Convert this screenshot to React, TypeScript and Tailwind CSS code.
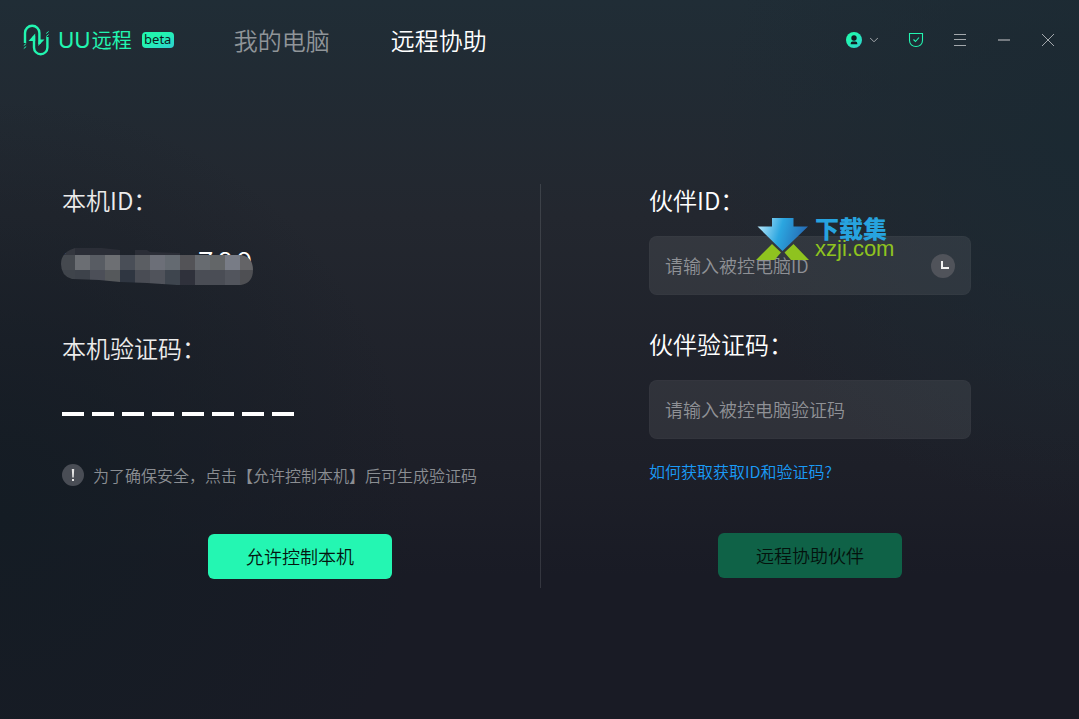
import type { ReactNode } from "react";

// 15px tiles that hide the device id
const MASK_ROWS = [
  {
    y: 0,
    height: 7,
    colors: ["#34373f", "#2b2e37", "#2b2e37", "#2b2e37", "none", "#2b2e37", "#2b2e37", "#2b2e37", "none"],
  },
  {
    y: 7,
    height: 15,
    colors: [
      "#45494f", "#6b6e73", "#585c63", "#6d6f73", "#494e57", "#5b5e63", "#6c6f78",
      "#646a71", "#535357", "#676b70", "#636668", "#787c86", "#646467",
    ],
  },
  {
    y: 22,
    height: 15,
    colors: [
      "#3f444b", "#3d424a", "#4c4f58", "#55585b", "#2f3641", "#494c54", "#50535b",
      "#3e454e", "#2f313b", "#4a4d55", "#4a4d55", "#52555d", "#4e4f53",
    ],
  },
];

const CODE_SLOTS = [0, 1, 2, 3, 4, 5, 6, 7];

function Logo() {
  return (
    <svg viewBox="0 0 26 32" fill="none" stroke="#22f5b0" strokeWidth={2.4} className="h-8 w-[26px]">
      <path d="M2 19V9a7.200 7.200 0 0 1 14.400 0V20" />
      <path d="M11 12v11.500a6.700 6.700 0 0 0 13.400 0V13" />
      <path d="M16 15.500h5.500L15.200 22ZM12.200 9.500V17H5.500Z" fill="#22f5b0" stroke="none" />
      <path d="M.8 21.500l2.400-2M.8 24.500l2.400-2M23.200 9.500l2.400-2M23.200 12.500l2.400-2" strokeWidth={1} />
    </svg>
  );
}

function UserIcon() {
  return (
    <svg viewBox="0 0 16 16" className="size-4">
      <defs>
        <linearGradient id="user-fill" x1="0" y1="0" x2="1" y2="1">
          <stop offset="0.3" stopColor="#22f5b0" />
          <stop offset="1" stopColor="#2fcfd0" />
        </linearGradient>
      </defs>
      <circle cx="8" cy="8" r="8" fill="url(#user-fill)" />
      <circle cx="8" cy="6" r="2.700" fill="#101a20" />
      <path d="M4.700 12.300v-.8a2 2 0 0 1 2-2h2.600a2 2 0 0 1 2 2v.8Z" fill="#101a20" />
    </svg>
  );
}

function MaskedId() {
  return (
    <div className="relative mt-8 h-10 w-[192px] text-white">
      <span className="absolute left-0 top-0 text-[28px] leading-6">1</span>
      <span className="absolute right-0.5 top-0 flex gap-1 text-[28px] leading-6">
        <span>7</span>
        <span>8</span>
        <span>9</span>
      </span>
      <svg viewBox="60 0 195 40" className="absolute -left-0.5 top-0 h-10 w-[195px]">
        <clipPath id="mask-shape">
          <path d="M75 0 102 0 120 2 147 2 150 4 180 5 195 7H241Q253 9 253 22T241 37H177L147 35 120 34 99 32 72 31Q61 28 61 16T75 0Z" />
        </clipPath>
        <g clipPath="url(#mask-shape)" shapeRendering="crispEdges">
          {MASK_ROWS.map((row) =>
            row.colors.map((color, i) => (
              <rect
                key={`${row.y}-${i}`}
                x={60 + i * 15}
                y={row.y}
                width={15}
                height={row.height}
                fill={color}
              />
            ))
          )}
        </g>
      </svg>
    </div>
  );
}

function Watermark() {
  return (
    <div className="pointer-events-none absolute -top-[18px] left-[107px] flex gap-[6px]">
      <svg viewBox="0 0 53 42" className="h-[42px] w-[53px]">
        <defs>
          <linearGradient id="arrow-fill" x1="0" y1="0.300" x2="1" y2="0.500">
            <stop offset="0" stopColor="#b5e6fa" />
            <stop offset="0.450" stopColor="#2ba6e0" />
            <stop offset="1" stopColor="#2565b0" />
          </linearGradient>
        </defs>
        <path d="M16 0H37.500V8.500H52L26.500 33 1.500 8.500H16Z" fill="url(#arrow-fill)" />
        <path d="M16 26 25 34.500 18.500 42H0ZM37.500 26 53 42H35L28.500 34.500Z" fill="#8fc31f" />
      </svg>
      <div className="flex flex-col">
        <span className="text-2xl font-black leading-5 text-[#27a3df]">下载集</span>
        <span className="mt-px font-['Liberation_Sans',sans-serif] text-[22px] leading-5 text-[#8fc31f]">
          xzji.com
        </span>
      </div>
    </div>
  );
}

function WindowButton({ label, children }: { label: string; children: ReactNode }) {
  return (
    <button type="button" aria-label={label} className="flex size-11 items-center justify-center">
      <svg viewBox="0 0 16 16" fill="none" stroke="#a3a8ac" className="size-4">
        {children}
      </svg>
    </button>
  );
}

function Header() {
  return (
    <header className="flex h-20 items-center pl-[23px] pr-[9px]">
      <div className="flex items-center">
        <Logo />
        <div className="ml-[9px] flex items-center gap-px leading-8 text-[#22f5b0]">
          <span className="font-['Inter',sans-serif] text-[22px] font-normal">UU</span>
          <span className="text-xl font-normal">远程</span>
        </div>
        <span className="ml-2.5 flex h-4 w-8 items-center justify-center rounded bg-linear-to-br from-[#22f5b0] from-40% to-[#2fcfd0] font-['Noto_Sans',sans-serif] text-[13px] font-normal text-[#0c1a1c]">
          beta
        </span>
      </div>

      <nav className="ml-[60px] flex gap-[61px] text-2xl">
        <a href="#computers" className="text-[#909599]">
          我的电脑
        </a>
        <a href="#assist" aria-current="page" className="text-white">
          远程协助
        </a>
      </nav>

      <div className="ml-auto flex items-center">
        <button type="button" aria-label="账号" className="mr-4 flex items-center gap-2">
          <UserIcon />
          <svg viewBox="0 0 8 6" fill="none" stroke="#a3a8ac" className="h-1.5 w-2">
            <path d="M0 .8 4 4.800 8 .8" />
          </svg>
        </button>
        <WindowButton label="安全">
          <path
            d="M1.500 1.500h13v7c0 3.500-2.800 6-6.500 6s-6.500-2.500-6.500-6ZM5.500 7.500l2 2 3.500-4"
            stroke="#22f5b0"
            strokeWidth={1.1}
          />
        </WindowButton>
        <WindowButton label="菜单">
          <path d="M2 2.500h12M2 7.500h12M2 13.500h12" />
        </WindowButton>
        <WindowButton label="最小化">
          <path d="M2 8h12" stroke="#747a80" strokeWidth={2} />
        </WindowButton>
        <WindowButton label="关闭">
          <path d="M2 2l12 12M14 2 2 14" />
        </WindowButton>
      </div>
    </header>
  );
}

function LocalPanel() {
  return (
    <section className="flex flex-col pl-[60px] pr-0.5 text-[#ececec]">
      <h2 className="text-2xl leading-8">本机ID：</h2>
      <MaskedId />
      <h2 className="mt-11 text-2xl leading-8">本机验证码：</h2>
      <div className="mt-12 flex gap-2">
        {CODE_SLOTS.map((slot) => (
          <span key={slot} className="h-1 w-[22px] bg-white" />
        ))}
      </div>
      <p className="mt-12 flex h-[22px] items-center gap-[9px] whitespace-nowrap text-base text-[#8b8e93]">
        <svg viewBox="0 0 22 22" className="size-[22px] shrink-0">
          <circle cx="11" cy="11" r="11" fill="#494d55" />
          <path d="M9.800 5h2.400l-.5 8.500h-1.400ZM10 15h2v2h-2Z" fill="#e6e6e6" />
        </svg>
        为了确保安全，点击【允许控制本机】后可生成验证码
      </p>
      <button
        type="button"
        className="mt-12 h-[45px] w-[184px] self-center rounded-md bg-[#24f6b2] pb-0.5 text-lg text-[#04150f]"
      >
        允许控制本机
      </button>
    </section>
  );
}

function PartnerPanel() {
  return (
    <form className="mx-auto flex w-[322px] flex-col text-white">
      <label htmlFor="partner-id" className="text-2xl leading-8">
        伙伴ID：
      </label>
      <div className="relative mt-5">
        <input
          id="partner-id"
          placeholder="请输入被控电脑ID"
          className="block h-[59px] w-full rounded-lg border border-white/2 bg-white/8 pb-0.5 pl-[15px] pr-14 text-lg placeholder:text-[#8f9196]"
        />
        <button type="button" aria-label="历史记录" className="absolute right-4 top-[18px]">
          <svg viewBox="0 0 24 24" className="size-6">
            <circle cx="12" cy="12" r="12" fill="#50535a" />
            <path d="M11 7v7h7" fill="none" stroke="#f2f2f2" strokeWidth={2} />
          </svg>
        </button>
        <Watermark />
      </div>
      <label htmlFor="partner-code" className="mt-[33px] text-2xl leading-8">
        伙伴验证码：
      </label>
      <input
        id="partner-code"
        placeholder="请输入被控电脑验证码"
        className="mt-5 block h-[59px] w-full rounded-lg border border-white/2 bg-white/8 px-[15px] pb-0.5 text-lg placeholder:text-[#8f9196]"
      />
      <a href="#help" className="mt-5 self-start text-base leading-6 text-[#1a9bf7]">
        如何获取获取ID和验证码?
      </a>
      <button
        type="submit"
        disabled
        className="mt-[50px] h-[45px] w-[184px] self-center rounded-md bg-[#0f6247] pb-0.5 text-lg text-[#04120d]"
      >
        远程协助伙伴
      </button>
    </form>
  );
}

export default function App() {
  return (
    <div className="flex min-h-screen flex-col bg-[radial-gradient(circle_at_0%_72%,#141c24_0%,#141c2400_35%),radial-gradient(circle_at_100%_20%,#1b2932_0%,#1b293200_30%),linear-gradient(180deg,#202d36_0%,#23272f_30%,#1d1f28_65%,#191b25_80%,#191b25_100%)] font-['Noto_Sans_CJK_SC',sans-serif] font-[350]">
      <Header />
      <main className="mt-[104px] grid grid-cols-[1fr_1px_1fr] pb-10 pl-0.5">
        <LocalPanel />
        <div className="h-[404px] bg-white/12" />
        <PartnerPanel />
      </main>
    </div>
  );
}
